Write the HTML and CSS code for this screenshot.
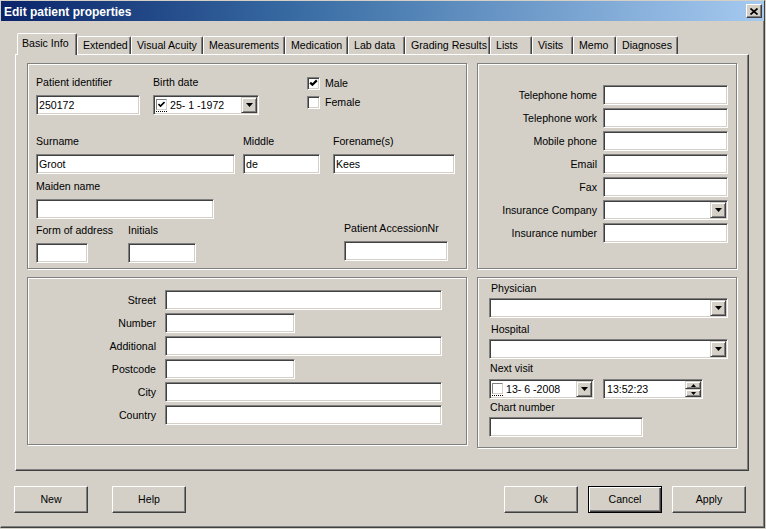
FILE: index.html
```html
<!DOCTYPE html>
<html lang="en">
<head>
<meta charset="utf-8">
<title>Edit patient properties</title>
<link rel="stylesheet" href="styles.css">
</head>
<body>
<div class="window">
  <div class="titlebar">
    <span class="title">Edit patient properties</span>
    <div class="close"><svg width="8" height="7" viewBox="0 0 8 7"><path d="M0.5 0.5 L7.5 6.5 M7.5 0.5 L0.5 6.5" stroke="#000" stroke-width="1.7" fill="none"/></svg></div>
  </div>

  <div class="tabs">
    <div class="tab active">Basic Info</div>
    <div class="tab">Extended</div>
    <div class="tab">Visual Acuity</div>
    <div class="tab">Measurements</div>
    <div class="tab">Medication</div>
    <div class="tab">Lab data</div>
    <div class="tab">Grading Results</div>
    <div class="tab">Lists</div>
    <div class="tab">Visits</div>
    <div class="tab">Memo</div>
    <div class="tab">Diagnoses</div>
  </div>

  <div class="panel">
    <!-- identity -->
    <div class="group g-ident">
      <div class="id-row row-a">
        <div class="fld f-pid"><div class="lbl">Patient identifier</div><div class="edit">250172</div></div>
        <div class="fld f-birth"><div class="lbl">Birth date</div>
          <div class="edit combo">
            <span class="cbfocus"><span class="minibox"><svg width="7" height="7" viewBox="0 0 7 7"><polyline points="0.5,3 2.5,5 6.5,1" stroke="#000" stroke-width="1.6" fill="none"/></svg></span></span>
            <span class="val">25- 1 -1972</span>
            <span class="ddbtn"><svg width="7" height="4" viewBox="0 0 7 4"><polygon points="0,0 7,0 3.5,4" fill="#000"/></svg></span>
          </div>
        </div>
        <div class="sex">
          <div class="chk"><span class="box"><svg width="9" height="9" viewBox="0 0 9 9"><polyline points="1.2,3.6 3.4,5.8 7.8,1.4" stroke="#000" stroke-width="2.2" fill="none"/></svg></span>Male</div>
          <div class="chk"><span class="box"></span>Female</div>
        </div>
      </div>
      <div class="id-row row-b">
        <div class="fld f-surname"><div class="lbl">Surname</div><div class="edit">Groot</div></div>
        <div class="fld f-middle"><div class="lbl">Middle</div><div class="edit">de</div></div>
        <div class="fld f-fore"><div class="lbl">Forename(s)</div><div class="edit">Kees</div></div>
      </div>
      <div class="id-row row-c">
        <div class="fld f-maiden"><div class="lbl">Maiden name</div><div class="edit"></div></div>
      </div>
      <div class="id-row row-d">
        <div class="fld f-form"><div class="lbl">Form of address</div><div class="edit"></div></div>
        <div class="fld f-init"><div class="lbl">Initials</div><div class="edit"></div></div>
        <div class="fld f-acc"><div class="lbl">Patient AccessionNr</div><div class="edit"></div></div>
      </div>
    </div>

    <!-- contact -->
    <div class="group g-contact">
      <div class="lbl-r">Telephone home</div><div class="edit"></div>
      <div class="lbl-r">Telephone work</div><div class="edit"></div>
      <div class="lbl-r">Mobile phone</div><div class="edit"></div>
      <div class="lbl-r">Email</div><div class="edit"></div>
      <div class="lbl-r">Fax</div><div class="edit"></div>
      <div class="lbl-r">Insurance Company</div>
      <div class="edit combo"><span class="val"></span><span class="ddbtn"><svg width="7" height="4" viewBox="0 0 7 4"><polygon points="0,0 7,0 3.5,4" fill="#000"/></svg></span></div>
      <div class="lbl-r">Insurance number</div><div class="edit"></div>
    </div>

    <!-- address -->
    <div class="group g-address">
      <div class="lbl-r">Street</div><div class="edit long"></div>
      <div class="lbl-r">Number</div><div class="edit short"></div>
      <div class="lbl-r">Additional</div><div class="edit long"></div>
      <div class="lbl-r">Postcode</div><div class="edit short"></div>
      <div class="lbl-r">City</div><div class="edit long"></div>
      <div class="lbl-r">Country</div><div class="edit long"></div>
    </div>

    <!-- care -->
    <div class="group g-care">
      <div class="lbl c-phys">Physician</div>
      <div class="edit combo c-combo"><span class="val"></span><span class="ddbtn"><svg width="7" height="4" viewBox="0 0 7 4"><polygon points="0,0 7,0 3.5,4" fill="#000"/></svg></span></div>
      <div class="lbl c-hosp">Hospital</div>
      <div class="edit combo c-combo"><span class="val"></span><span class="ddbtn"><svg width="7" height="4" viewBox="0 0 7 4"><polygon points="0,0 7,0 3.5,4" fill="#000"/></svg></span></div>
      <div class="lbl c-next">Next visit</div>
      <div class="visit-row">
        <div class="edit combo c-date">
          <span class="cbfocus"><span class="minibox"></span></span>
          <span class="val">13- 6 -2008</span>
          <span class="ddbtn"><svg width="7" height="4" viewBox="0 0 7 4"><polygon points="0,0 7,0 3.5,4" fill="#000"/></svg></span>
        </div>
        <div class="edit combo c-time">
          <span class="val">13:52:23</span>
          <span class="spin">
            <span class="spinbtn"><svg width="5" height="3" viewBox="0 0 5 3"><polygon points="2.5,0 5,3 0,3" fill="#000"/></svg></span>
            <span class="spinbtn"><svg width="5" height="3" viewBox="0 0 5 3"><polygon points="0,0 5,0 2.5,3" fill="#000"/></svg></span>
          </span>
        </div>
      </div>
      <div class="lbl c-chart">Chart number</div>
      <div class="edit c-chartfld"></div>
    </div>
  </div>

  <div class="buttons">
    <div class="btn-group left">
      <div class="btn">New</div>
      <div class="btn">Help</div>
    </div>
    <div class="btn-group right">
      <div class="btn">Ok</div>
      <div class="btn default">Cancel</div>
      <div class="btn">Apply</div>
    </div>
  </div>
</div>
</body>
</html>
```

FILE: styles.css
```css
* { box-sizing: border-box; }

html, body {
  margin: 0;
  padding: 0;
}

body {
  width: 766px;
  height: 529px;
  overflow: hidden;
  background: #d4d0c8;
  font-family: "Liberation Sans", Arial, sans-serif;
  font-size: 10.6px;
  color: #000;
}

/* ---------- window frame ---------- */
.window {
  width: 765px;
  height: 528px;
  border-top: 1px solid #d4d0c8;
  border-left: 1px solid #d4d0c8;
  border-right: 1px solid #404040;
  border-bottom: 1px solid #404040;
  box-shadow: inset -1px -1px 0 #808080;
  display: flex;
  flex-direction: column;
}

.titlebar {
  height: 20px;
  flex: none;
  display: flex;
  align-items: center;
  justify-content: space-between;
  padding: 0 2px 0 3px;
  background: linear-gradient(to right, #0a246a 0%, #3a6ea5 40%, #a6caf0 100%);
}

.title {
  color: #fff;
  font-weight: bold;
  font-size: 12px;
  line-height: 20px;
  padding-top: 1px;
  white-space: nowrap;
}

.close {
  width: 16px;
  height: 14px;
  background: #d4d0c8;
  border: 1px solid;
  border-color: #fff #404040 #404040 #fff;
  box-shadow: inset -1px -1px 0 #808080;
  display: flex;
  align-items: center;
  justify-content: center;
  padding-right: 1px;
}
.close svg { display: block; }

/* ---------- tabs ---------- */
.tabs {
  margin: 12px 0 0 16px;
  height: 21px;
  flex: none;
  display: flex;
  align-items: flex-end;
}

.tab {
  height: 18px;
  border-top: 1px solid #fff;
  border-left: 1px solid #fff;
  border-right: 1px solid #404040;
  border-radius: 2px 2px 0 0;
  box-shadow: inset -1px 0 0 #808080;
  padding: 2px 0 0 5px;
  line-height: 13px;
  white-space: nowrap;
  overflow: hidden;
  background: #d4d0c8;
}

.tab.active {
  height: 22px;
  padding: 3px 0 0 4px;
  margin-bottom: -1px;
  position: relative;
  z-index: 1;
}

.tab:nth-child(1)  { width: 60px; }
.tab:nth-child(2)  { width: 54px; }
.tab:nth-child(3)  { width: 72px; }
.tab:nth-child(4)  { width: 82px; }
.tab:nth-child(5)  { width: 63px; }
.tab:nth-child(6)  { width: 57px; }
.tab:nth-child(7)  { width: 85px; }
.tab:nth-child(8)  { width: 42px; }
.tab:nth-child(9)  { width: 41px; }
.tab:nth-child(10) { width: 43px; }
.tab:nth-child(11) { width: 62px; }

/* ---------- tab page ---------- */
.panel {
  margin-left: 14px;
  width: 734px;
  height: 417px;
  flex: none;
  border-top: 1px solid #fff;
  border-left: 1px solid #fff;
  border-right: 1px solid #404040;
  border-bottom: 1px solid #404040;
  box-shadow: inset -1px -1px 0 #808080;
  padding: 8px 0 0 11px;
  display: grid;
  grid-template-columns: 440px 260px;
  column-gap: 10px;
  row-gap: 8px;
  align-content: start;
  align-items: start;
}

.group {
  border: 1px solid #808080;
  box-shadow: inset 1px 1px 0 #fff, 1px 1px 0 #fff;
}

/* ---------- common controls ---------- */
.lbl {
  height: 13px;
  line-height: 13px;
  white-space: nowrap;
}

.lbl-r {
  line-height: 13px;
  white-space: nowrap;
  text-align: right;
  align-self: center;
}

.edit {
  height: 20px;
  background: #fff;
  border: 1px solid;
  border-color: #808080 #fff #fff #808080;
  box-shadow: inset 1px 1px 0 #404040, inset -1px -1px 0 #d4d0c8;
  padding: 0 2px;
  line-height: 18px;
  white-space: pre;
  overflow: hidden;
}

.combo {
  display: flex;
  align-items: center;
  padding: 1px;
}
.combo .val {
  flex: 1;
  line-height: 16px;
  padding-left: 1px;
  white-space: pre;
  overflow: hidden;
}

.ddbtn {
  flex: none;
  width: 16px;
  height: 16px;
  background: #d4d0c8;
  border: 1px solid;
  border-color: #d4d0c8 #404040 #404040 #d4d0c8;
  box-shadow: inset 1px 1px 0 #fff, inset -1px -1px 0 #808080;
  display: flex;
  align-items: center;
  justify-content: center;
}
.ddbtn svg { display: block; }

.cbfocus {
  flex: none;
  margin-left: 1px;
  margin-right: 2px;
  padding-bottom: 1px;
  border-bottom: 1px dotted #000;
  display: flex;
}

.minibox {
  width: 11px;
  height: 11px;
  background: #fff;
  border: 1px solid;
  border-color: #808080 #d4d0c8 #d4d0c8 #808080;
  display: flex;
  align-items: center;
  justify-content: center;
}
.minibox svg { display: block; }

.box {
  flex: none;
  width: 13px;
  height: 13px;
  background: #fff;
  border: 1px solid;
  border-color: #808080 #fff #fff #808080;
  box-shadow: inset 1px 1px 0 #404040, inset -1px -1px 0 #d4d0c8;
  display: flex;
  align-items: center;
  justify-content: center;
}
.box svg { display: block; }

/* ---------- identity group ---------- */
.g-ident { height: 206px; }

.id-row {
  display: flex;
  align-items: flex-start;
  padding-left: 8px;
}
.row-a { margin-top: 12px; }
.row-b { margin-top: 20px; }
.row-c { margin-top: 6px; }
.row-d { margin-top: 5px; }

.fld {
  display: flex;
  flex-direction: column;
}
.fld .lbl { margin-bottom: 6px; }

.f-pid     { width: 104px; }
.f-birth   { width: 106px; margin-left: 13px; }
.f-surname { width: 199px; }
.f-middle  { width: 77px;  margin-left: 8px; }
.f-fore    { width: 122px; margin-left: 13px; }
.f-maiden  { width: 178px; }
.f-form    { width: 52px; }
.f-init    { width: 68px;  margin-left: 40px; }
.f-acc     { width: 104px; margin-left: 148px; margin-top: -2px; }

.sex {
  margin-left: 48px;
  padding-top: 1px;
  display: flex;
  flex-direction: column;
  gap: 6px;
}

.chk {
  display: flex;
  align-items: center;
  gap: 5px;
  height: 13px;
  line-height: 13px;
}

/* ---------- contact group ---------- */
.g-contact {
  height: 206px;
  display: grid;
  grid-template-columns: auto 125px;
  justify-content: end;
  column-gap: 6px;
  row-gap: 3px;
  padding: 21px 8px 0 0;
  align-content: start;
}

/* ---------- address group ---------- */
.g-address {
  height: 168px;
  display: grid;
  grid-template-columns: 128px auto;
  column-gap: 9px;
  row-gap: 3px;
  padding-top: 12px;
  align-content: start;
  justify-items: start;
}
.g-address .lbl-r { justify-self: stretch; }
.edit.long  { width: 277px; }
.edit.short { width: 130px; }

/* ---------- care group ---------- */
.g-care {
  height: 171px;
  display: flex;
  flex-direction: column;
  align-items: flex-start;
  padding: 4px 0 0 11px;
}

.c-phys  { margin-left: 2px; }
.c-hosp  { margin-left: 2px; margin-top: 5px; }
.c-next  { margin-left: 1px; margin-top: 3px; }
.c-chart { margin-left: 1px; margin-top: 2px; }

.c-combo { width: 239px; margin-top: 3px; }

.visit-row {
  display: flex;
  gap: 9px;
  margin-top: 4px;
}
.c-date { width: 105px; }
.c-time { width: 100px; }
.c-time .val { padding-left: 2px; }

.spin {
  flex: none;
  width: 16px;
  height: 16px;
  display: flex;
  flex-direction: column;
}
.spinbtn {
  height: 8px;
  background: #d4d0c8;
  border: 1px solid;
  border-color: #d4d0c8 #404040 #404040 #d4d0c8;
  box-shadow: inset 1px 1px 0 #fff, inset -1px -1px 0 #808080;
  display: flex;
  align-items: center;
  justify-content: center;
}
.spinbtn svg { display: block; }

.c-chartfld { width: 154px; margin-top: 3px; }

/* ---------- dialog buttons ---------- */
.buttons {
  margin-top: 15px;
  flex: none;
  display: flex;
  justify-content: space-between;
  padding: 0 18px 0 13px;
}

.btn-group { display: flex; }
.btn-group.left  { gap: 24px; }
.btn-group.right { gap: 10px; }

.btn {
  width: 74px;
  height: 27px;
  background: #d4d0c8;
  border: 1px solid;
  border-color: #fff #404040 #404040 #fff;
  box-shadow: inset -1px -1px 0 #808080;
  display: flex;
  align-items: center;
  justify-content: center;
  line-height: 13px;
}

.btn.default {
  border-color: #000;
  box-shadow: inset 1px 1px 0 #fff, inset -1px -1px 0 #404040, inset -2px -2px 0 #808080;
}
```
